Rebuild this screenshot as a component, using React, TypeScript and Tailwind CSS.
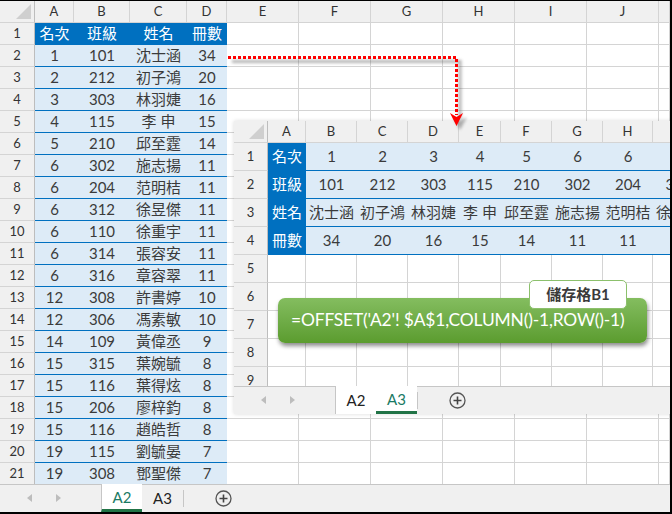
import React from 'react';

const FONT = "font-['Lato','Noto_Sans_CJK_TC',sans-serif]";

const rows = [
  ['1', '101', '沈士涵', '34'],
  ['2', '212', '初子鴻', '20'],
  ['3', '303', '林羽婕', '16'],
  ['4', '115', '李 申', '15'],
  ['5', '210', '邱至霆', '14'],
  ['6', '302', '施志揚', '11'],
  ['6', '204', '范明桔', '11'],
  ['6', '312', '徐昱傑', '11'],
  ['6', '110', '徐重宇', '11'],
  ['6', '314', '張容安', '11'],
  ['6', '316', '章容翠', '11'],
  ['12', '308', '許書婷', '10'],
  ['12', '306', '馮素敏', '10'],
  ['14', '109', '黃偉丞', '9'],
  ['15', '315', '葉婉毓', '8'],
  ['15', '116', '葉得炫', '8'],
  ['15', '206', '廖梓鈞', '8'],
  ['15', '116', '趙皓哲', '8'],
  ['19', '115', '劉毓晏', '7'],
  ['19', '308', '鄧聖傑', '7'],
];

const headCell = 'bg-[#f0f0f0] border-r border-b border-[#d4d4d4] flex items-center justify-center text-[13px] text-[#333]';
const rowHead = 'bg-[#f0f0f0] border-r border-b border-r-[#bdbdbd] border-b-[#d4d4d4] flex items-center justify-center text-[13px] text-[#333]';
const emptyCell = 'bg-white border-r border-b border-[#d4d4d4]';
const dataCell = 'bg-[#ddebf7] border-b border-[#0070c0] flex items-center justify-center text-[15px] text-[#3b3b3b] whitespace-nowrap';
const blueCell = 'bg-[#0070c0] border-b border-[#0070c0] flex items-center justify-center text-[15px] text-white whitespace-nowrap';

const Corner = () => (
  <div className="bg-[#f0f0f0] border-r border-b border-r-[#bdbdbd] border-b-[#d4d4d4] relative">
    <svg className="absolute right-[3px] bottom-[3px]" width="15" height="15" viewBox="0 0 15 15">
      <polygon points="15,0 15,15 0,15" fill="#cfcfcf" />
    </svg>
  </div>
);

const TabBar = ({ active, firstWhite }: { active: 'A2' | 'A3'; firstWhite?: boolean }) => (
  <div className="h-[28px] bg-[#f0f0f0] border-t border-[#c6c6c6] flex items-stretch relative">
    <div className="w-[101px] relative">
      <svg className="absolute left-[27px] top-[9px]" width="6" height="8" viewBox="0 0 6 8">
        <polygon points="5,0 5,8 0,4" fill="#bdbdbd" />
      </svg>
      <svg className="absolute left-[56px] top-[9px]" width="6" height="8" viewBox="0 0 6 8">
        <polygon points="0,0 0,8 5,4" fill="#bdbdbd" />
      </svg>
    </div>
    {(['A2', 'A3'] as const).map((t) => {
      const isActive = t === active;
      const white = isActive || (firstWhite && t === 'A2');
      return (
        <div
          key={t}
          className={`w-[41px] flex items-center justify-center text-[15px] -mt-px ${
            white ? 'bg-white' : ''
          } ${t === 'A2' ? 'border-l border-[#c6c6c6]' : ''} ${
            isActive ? 'border-b-[3px] border-b-[#217346] text-[#1a7a64] pt-[2px]' : 'text-[#222]'
          }`}
        >
          {t}
        </div>
      );
    })}
    <div className="w-px bg-[#c6c6c6] my-[5px]" />
    <div className="flex-1 relative">
      <svg className="absolute left-[31px] top-[5px]" width="17" height="17" viewBox="0 0 17 17">
        <circle cx="8.5" cy="8.5" r="7.5" fill="none" stroke="#555" strokeWidth="1.3" />
        <path d="M8.5 4.5v8M4.5 8.5h8" stroke="#444" strokeWidth="1.6" />
      </svg>
    </div>
  </div>
);

const MainSheet = () => {
  const letters = ['A', 'B', 'C', 'D', 'E', 'F', 'G', 'H', 'I', 'J', ''];
  return (
    <div className="grid grid-cols-[35px_39px_56px_57px_40px_72px_72px_72px_72px_72px_72px_1fr] auto-rows-[22px]">
      <Corner />
      {letters.map((l, i) => (
        <div key={i} className={headCell}>{l}</div>
      ))}
      <div className={rowHead}>1</div>
      {['名次', '班級', '姓名', '冊數'].map((h) => (
        <div key={h} className={blueCell}>{h}</div>
      ))}
      {Array.from({ length: 7 }).map((_, i) => (
        <div key={i} className={emptyCell} />
      ))}
      {rows.map((r, ri) => (
        <React.Fragment key={ri}>
          <div className={rowHead}>{ri + 2}</div>
          {r.map((v, ci) => (
            <div key={ci} className={dataCell}>{v}</div>
          ))}
          {Array.from({ length: 7 }).map((_, i) => (
            <div key={i} className={emptyCell} />
          ))}
        </React.Fragment>
      ))}
    </div>
  );
};

const OverlaySheet = () => {
  const letters = ['A', 'B', 'C', 'D', 'E', 'F', 'G', 'H', ''];
  const cols = rows.slice(0, 8);
  const labels = ['名次', '班級', '姓名', '冊數'];
  return (
    <div className="absolute left-[234px] top-[120px] w-[438px] h-[293px] flex flex-col bg-white shadow-[0_0_4px_rgba(0,0,0,0.15)]">
      <div className="h-[265px] overflow-hidden">
        <div className="grid grid-cols-[34px_38px_51px_51px_51px_42px_51px_51px_50px_51px] grid-rows-[22px_28px_28px_28px_28px_28px_28px_28px_28px_28px] w-[470px]">
          <Corner />
          {letters.map((l, i) => (
            <div key={i} className={headCell}>{l}</div>
          ))}
          {labels.map((lab, ri) => (
            <React.Fragment key={lab}>
              <div className={rowHead}>{ri + 1}</div>
              <div className={blueCell}>{lab}</div>
              {cols.map((c, ci) => (
                <div key={ci} className={dataCell}>{c[ri]}</div>
              ))}
            </React.Fragment>
          ))}
          {[5, 6, 7, 8, 9].map((n) => (
            <React.Fragment key={n}>
              <div className={rowHead}>{n}</div>
              {Array.from({ length: 9 }).map((_, i) => (
                <div key={i} className={emptyCell} />
              ))}
            </React.Fragment>
          ))}
        </div>
      </div>
      <TabBar active="A3" firstWhite />
    </div>
  );
};

const Callout = () => (
  <>
    <div className="absolute left-[278px] top-[297px] w-[369px] h-[45px] rounded-[7px] bg-gradient-to-b from-[#84bd5f] to-[#5b9c2e] shadow-[1px_3px_4px_rgba(0,0,0,0.45)] flex items-center pl-[13px]">
      <span className="text-white text-[17.4px] tracking-[-0.15px] whitespace-nowrap">=OFFSET('A2'! $A$1,COLUMN()-1,ROW()-1)</span>
    </div>
    <div className="absolute left-[529px] top-[279px] w-[98px] h-[29px] rounded-[5px] bg-white border border-[#8cc06c] flex items-center justify-center">
      <span className="text-[15px] font-bold text-[#3a3a3a]">儲存格B1</span>
    </div>
  </>
);

const Arrow = () => (
  <svg className="absolute left-0 top-0 pointer-events-none" width="672" height="514">
    <defs>
      <filter id="blur" x="-20%" y="-20%" width="140%" height="140%">
        <feGaussianBlur stdDeviation="1.5" />
      </filter>
    </defs>
    <g filter="url(#blur)" opacity="0.45" transform="translate(3 4)">
      <path d="M229 56.5H457V114" fill="none" stroke="#555" strokeWidth="3" />
      <polygon points="450,112 457,125 464,112 457,116" fill="#555" />
    </g>
    <path d="M228 56.5H456.5V114" fill="none" stroke="#ff0000" strokeWidth="3" strokeDasharray="3 2" />
    <polygon points="450,112 456.5,125 463,112 456.5,116" fill="#ff0000" />
  </svg>
);

export default function App() {
  return (
    <div className={`w-[672px] h-[514px] relative overflow-hidden bg-white border-t border-r-2 border-b-2 border-black flex flex-col ${FONT}`}>
      <div className="h-[484px] overflow-hidden">
        <MainSheet />
      </div>
      <TabBar active="A2" />
      <OverlaySheet />
      <Callout />
      <Arrow />
    </div>
  );
}
